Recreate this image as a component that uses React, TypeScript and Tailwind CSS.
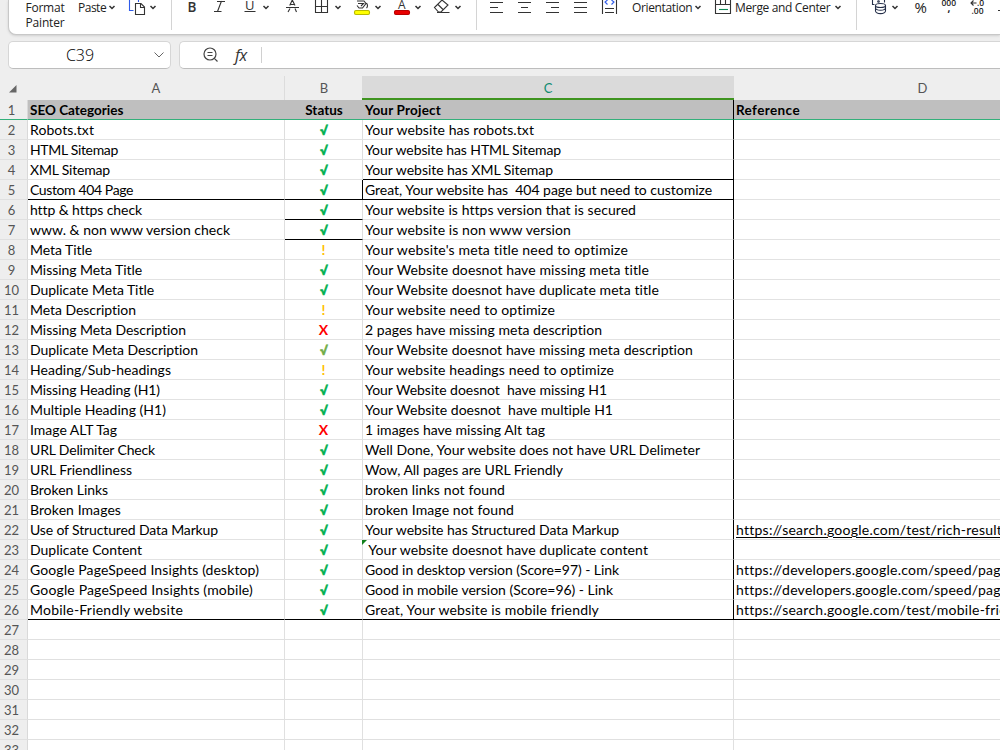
import { useLayoutEffect, useRef } from 'react'
import type { ReactNode } from 'react'

type Mark = 'ok' | 'olive' | 'warn' | 'bad'

interface Row {
    category: string
    categoryWidth: number
    mark: Mark
    project: string
    projectWidth: number
    link?: string
}

const rows: Row[] = [
    { category: 'Robots.txt', categoryWidth: 64, mark: 'ok', project: 'Your website has robots.txt', projectWidth: 169 },
    { category: 'HTML Sitemap', categoryWidth: 88, mark: 'ok', project: 'Your website has HTML Sitemap', projectWidth: 196 },
    { category: 'XML Sitemap', categoryWidth: 80, mark: 'ok', project: 'Your website has XML Sitemap', projectWidth: 188 },
    { category: 'Custom 404 Page', categoryWidth: 103, mark: 'ok', project: 'Great, Your website has  404 page but need to customize', projectWidth: 347 },
    { category: 'http & https check', categoryWidth: 112, mark: 'ok', project: 'Your website is https version that is secured', projectWidth: 271 },
    { category: 'www. & non www version check', categoryWidth: 200, mark: 'ok', project: 'Your website is non www version', projectWidth: 206 },
    { category: 'Meta Title', categoryWidth: 62, mark: 'warn', project: "Your website's meta title need to optimize", projectWidth: 263 },
    { category: 'Missing Meta Title', categoryWidth: 112, mark: 'ok', project: 'Your Website doesnot have missing meta title', projectWidth: 284 },
    { category: 'Duplicate Meta Title', categoryWidth: 124, mark: 'ok', project: 'Your Website doesnot have duplicate meta title', projectWidth: 294 },
    { category: 'Meta Description', categoryWidth: 106, mark: 'warn', project: 'Your website need to optimize', projectWidth: 190 },
    { category: 'Missing Meta Description', categoryWidth: 156, mark: 'bad', project: '2 pages have missing meta description', projectWidth: 237 },
    { category: 'Duplicate Meta Description', categoryWidth: 168, mark: 'olive', project: 'Your Website doesnot have missing meta description', projectWidth: 328 },
    { category: 'Heading/Sub-headings', categoryWidth: 141, mark: 'warn', project: 'Your website headings need to optimize', projectWidth: 249 },
    { category: 'Missing Heading (H1)', categoryWidth: 130, mark: 'ok', project: 'Your Website doesnot  have missing H1', projectWidth: 242 },
    { category: 'Multiple Heading (H1)', categoryWidth: 136, mark: 'ok', project: 'Your Website doesnot  have multiple H1', projectWidth: 248 },
    { category: 'Image ALT Tag', categoryWidth: 87, mark: 'bad', project: '1 images have missing Alt tag', projectWidth: 180 },
    { category: 'URL Delimiter Check', categoryWidth: 125, mark: 'ok', project: 'Well Done, Your website does not have URL Delimeter', projectWidth: 335 },
    { category: 'URL Friendliness', categoryWidth: 102, mark: 'ok', project: 'Wow, All pages are URL Friendly', projectWidth: 198 },
    { category: 'Broken Links', categoryWidth: 78, mark: 'ok', project: 'broken links not found', projectWidth: 140 },
    { category: 'Broken Images', categoryWidth: 91, mark: 'ok', project: 'broken Image not found', projectWidth: 149 },
    { category: 'Use of Structured Data Markup', categoryWidth: 188, mark: 'ok', project: 'Your website has Structured Data Markup', projectWidth: 254, link: 'https://search.google.com/test/rich-results' },
    { category: 'Duplicate Content', categoryWidth: 112, mark: 'ok', project: ' Your website doesnot have duplicate content', projectWidth: 283 },
    { category: 'Google PageSpeed Insights (desktop)', categoryWidth: 229, mark: 'ok', project: 'Good in desktop version (Score=97) - Link', projectWidth: 254, link: 'https://developers.google.com/speed/pagespeed' },
    { category: 'Google PageSpeed Insights (mobile)', categoryWidth: 223, mark: 'ok', project: 'Good in mobile version (Score=96) - Link', projectWidth: 248, link: 'https://developers.google.com/speed/pagespeed' },
    { category: 'Mobile-Friendly website', categoryWidth: 153, mark: 'ok', project: 'Great, Your website is mobile friendly', projectWidth: 234, link: 'https://search.google.com/test/mobile-friendly' },
]

const emptyRows = [27, 28, 29, 30, 31, 32, 33]

const marks: Record<Mark, { sign: string; style: string }> = {
    ok: { sign: '√', style: "text-[#00b050] font-['Open_Sans',sans-serif] font-extrabold text-[12px] leading-[21px] [-webkit-text-stroke:0.5px_#00b050]" },
    olive: { sign: '√', style: "text-[#70ad47] font-['Open_Sans',sans-serif] font-extrabold text-[12px] leading-[21px] [-webkit-text-stroke:0.5px_#70ad47]" },
    warn: { sign: '!', style: 'text-[#ffc000]' },
    bad: { sign: 'X', style: 'text-[#ff0000]' },
}

// Spreads the letters so that the text takes up the given width
function FitText({ text, width }: { text: string; width: number }) {
    const ref = useRef<HTMLSpanElement>(null)

    useLayoutEffect(() => {
        const el = ref.current
        if (!el) return
        el.style.letterSpacing = '0px'
        const natural = el.getBoundingClientRect().width
        el.style.letterSpacing = `${(width - natural) / text.length}px`
    }, [text, width])

    return <span ref={ref} className="whitespace-pre">{text}</span>
}

// Ribbon drawings share one coordinate system, each tile shows the slice that starts at x
function Tile({ x, w, children }: { x: number; w: number; children?: ReactNode }) {
    return (
        <svg width={w} height={34} viewBox={`${x} 0 ${w} 34`} className="shrink-0" fill="none" stroke="#333" strokeWidth={1.1}>
            {children}
        </svg>
    )
}

function Chevron({ x }: { x: number }) {
    return <path d={`M${x - 2.5} 6 l2.5 2.5 l2.5 -2.5`} strokeWidth={1.5} />
}

function Divider() {
    return <div className="w-px h-[30px] shrink-0 bg-[#d4d4d4]" />
}

function Ribbon() {
    return (
        <div className="ml-2 h-[35px] flex bg-white rounded-bl-lg border-b border-l border-[#c8c8c8] shadow-sm overflow-hidden font-['Open_Sans',sans-serif] text-[12px] text-[#222]">
            <div className="ml-[12px] w-[48px] shrink-0 text-center leading-[15px] tracking-[-0.2px]">
                <div>Format</div>
                <div>Painter</div>
            </div>
            <div className="ml-[9px] w-[30px] shrink-0 leading-[15px] tracking-[-0.500px]">Paste</div>
            <Tile x={108} w={63}>
                <Chevron x={112} />
                <path d="M138.500 0 V2 M129.500 0 V10.500 H133.500" stroke="#2f5bea" />
                <path d="M135.500 3.500 H141 L144.500 7 V14.500 H135.500 Z M140.500 3.500 V7.500 H144.500" />
                <Chevron x={153} />
            </Tile>
            <Divider />
            <Tile x={172} w={304}>
                <g fill="#333" stroke="none" fontFamily="Open Sans, sans-serif">
                    <text x="187.500" y="12" fontSize="13.500" fontWeight="600">B</text>
                    <text x="245" y="9.500" fontSize="13">U</text>
                    <text x="398" y="9" fontSize="12">A</text>
                </g>
                <path d="M217 1.500 H225 M214 11.500 H221.500 M221.500 1 L217.500 11.500 M244.500 11.500 H255.500" />
                <Chevron x={266} />
                <path d="M286 7.500 H299 M288 12 L290 8.500 M296.500 12 L295 8.500 M289.700 5.500 L292.300 0 L295 5.500 M290.500 4.500 H294" />
                <path d="M315.500 -1 V12.500 H327.500 V-1 M315.500 6.500 H327.500 M321.500 0 V12.500" />
                <Chevron x={338} />
                <path d="M357 1 H364 L366 3.500 L362.500 8 H359 L357 5.500 M358 3.500 H363.500 L361 6 M366.500 3 Q368.500 6 366.500 8" />
                <rect x="354.500" y="10.500" width="15" height="4" rx="1.500" fill="#ffff00" stroke="#b9b900" />
                <Chevron x={378} />
                <rect x="394.500" y="10.500" width="15" height="4" rx="1.500" fill="#e80000" stroke="#b80000" />
                <Chevron x={418} />
                <path d="M434.500 7.500 L442 0 L448 5 L441 12 H438.500 Z M438 4.500 L443.500 10 M437 12.500 H449.500" />
                <Chevron x={458} />
            </Tile>
            <Divider />
            <Tile x={477} w={155}>
                <path d="M490 2.500 H503 M490 7.500 H498 M490 12.500 H503 M518 2.500 H531 M521 7.500 H528 M518 12.500 H531 M546 2.500 H559 M551 7.500 H559 M546 12.500 H559 M574 2.500 H587 M574 7.500 H587 M574 12.500 H587" />
                <path d="M602.500 0 V14 M616.500 0 V14 M605 8.500 H614 M605 12.500 H614" />
                <path d="M607.500 0 L605 2 L607.500 4.500 M611.500 0 L614 2 L611.500 4.500" stroke="#2f5bea" />
            </Tile>
            <div className="w-[62px] shrink-0 leading-[15px] tracking-[-0.350px]">Orientation</div>
            <Tile x={694} w={41}>
                <Chevron x={698} />
                <path d="M715.500 -1 V13.500 H730.500 V-1 M715.500 4.500 H730.500 M720.500 0 V4.500 M725.500 0 V4.500" />
                <path d="M719 9.500 H728" stroke="#0e8a55" />
            </Tile>
            <div className="w-[96px] shrink-0 whitespace-nowrap leading-[15px] tracking-[-0.350px]">Merge and Center</div>
            <Tile x={831} w={25}>
                <Chevron x={838} />
            </Tile>
            <Divider />
            <Tile x={857} w={143}>
                <g stroke="#26304a">
                    <path d="M874.500 4.500 H872.500 V0 M884.500 0 V2.500" />
                    <path d="M875.500 5.500 V11 C876 14.500 885 14.500 885.500 11 V5.500 M875.500 8 C876 11 885 11 885.500 8" />
                    <ellipse cx="880.500" cy="5.500" rx="5" ry="2" />
                    <circle cx="878.500" cy="1.500" r="0.800" />
                </g>
                <Chevron x={895} />
                <g fill="#222" stroke="none" fontFamily="Open Sans, sans-serif">
                    <text x="914.500" y="12.500" fontSize="15">%</text>
                    <text x="941.500" y="5.500" fontSize="8.500" fontWeight="600">000</text>
                    <text x="947.500" y="12" fontSize="10" fontWeight="700">,</text>
                    <text x="977" y="5.500" fontSize="8.500" fontWeight="600">.0</text>
                    <text x="971.500" y="14" fontSize="8.500" fontWeight="600">.00</text>
                </g>
                <path d="M973.500 0.500 L971 3 L973.500 5.500 M971 3 H976.500 M998 10.500 H1000" />
            </Tile>
        </div>
    )
}

function FormulaBar() {
    return (
        <div className="mt-[6px] ml-2 h-7 flex gap-2">
            <div className="w-[163px] shrink-0 flex items-center bg-white rounded-[5px] border border-[#d6d6d6] border-b-[#bdbdbd]">
                <span className="w-[142px] pb-px text-center font-['Open_Sans',sans-serif] font-light text-[16px] leading-none text-black">C39</span>
                <svg width="12" height="8" viewBox="0 0 12 8" fill="none" stroke="#666" className="ml-[2px]">
                    <path d="M1.500 1.500 L6 6 L10.500 1.500" />
                </svg>
            </div>
            <div className="flex-1 flex items-center bg-white rounded-l-[5px] border border-r-0 border-[#d6d6d6] border-b-[#bdbdbd]">
                <svg width="16" height="16" viewBox="0 0 16 16" fill="none" stroke="#444" strokeWidth="1.200" className="ml-[23px]">
                    <circle cx="7" cy="7" r="6" />
                    <path d="M4.500 5.500 H9.500 M4.500 8.500 H9.500 M11.300 11.300 L14.500 14.500" />
                </svg>
                <span className="ml-[16px] w-[16px] font-['Open_Sans',sans-serif] italic text-[16px] text-[#333] leading-none tracking-[-0.5px]">fx</span>
                <div className="ml-[10px] w-px h-4 bg-[#d0d0d0]" />
            </div>
        </div>
    )
}

function ColumnHeads() {
    return (
        <div className="mt-[7px] h-6 flex text-center text-[13px] leading-[25px] text-[#555]">
            <div className="w-7 shrink-0 flex items-center justify-center">
                <svg width="8" height="8" viewBox="0 0 8 8" className="-ml-0.5 mt-0.5">
                    <path d="M7.500 0 V7.500 H0 Z" fill="#666" />
                </svg>
            </div>
            <div className="w-[257px] shrink-0 border-r border-[#dcdcdc]">A</div>
            <div className="w-[77px] shrink-0 pl-px">B</div>
            <div className="w-[372px] shrink-0 bg-[#dadada] border-b-2 border-[#3f9420] text-[#0e8a70]">C</div>
            <div className="w-[377px] shrink-0">D</div>
        </div>
    )
}

function RowNumber({ n }: { n: number }) {
    return (
        <div className={`w-7 shrink-0 pr-[4px] text-center text-[13px] font-normal text-[#555] bg-[#eee] border-r border-b border-r-[#d9d9d9] ${n === 1 ? 'border-b-[#33b07a]' : 'border-b-[#e0e0e0]'}`}>
            {n}
        </div>
    )
}

function HeadRow() {
    const cell = 'shrink-0 border-b border-b-[#33b07a] bg-[#bfbfbf]'
    return (
        <div className="flex h-5 leading-[20px] font-bold text-[13.500px]">
            <RowNumber n={1} />
            <div className={`${cell} w-[257px] pl-[2px]`}>SEO Categories</div>
            <div className={`${cell} w-[78px] text-center`}>Status</div>
            <div className={`${cell} w-[371px] pl-[2px] border-r border-r-black`}><FitText text="Your Project" width={76} /></div>
            <div className={`${cell} w-[377px] pl-[2px]`}><FitText text="Reference" width={64} /></div>
        </div>
    )
}

function DataRow({ n, row }: { n: number; row: Row }) {
    const last = n === 26
    const mark = marks[row.mark]
    return (
        <div className="flex h-5 leading-[20px]">
            <RowNumber n={n} />
            <div className={`w-[257px] shrink-0 pl-[2px] border-r border-b border-r-[#dedede] ${last || n === 5 ? 'border-b-black' : 'border-b-[#e2e2e2]'}`}>
                <FitText text={row.category} width={row.categoryWidth} />
            </div>
            <div className={`w-[78px] shrink-0 text-center font-bold border-r border-b ${mark.style} ${n === 5 ? 'border-r-black' : 'border-r-[#dedede]'} ${last || (n >= 5 && n <= 7) ? 'border-b-black' : 'border-b-[#e2e2e2]'}`}>
                {mark.sign}
            </div>
            <div className={`relative w-[371px] shrink-0 pl-[2px] border-r border-b border-r-black ${last || n === 4 || n === 5 ? 'border-b-black' : 'border-b-[#e2e2e2]'}`}>
                {n === 23 && (
                    <svg width="5" height="5" className="absolute -left-px top-0">
                        <path d="M0 0 H5 L0 5 Z" fill="#12801c" />
                    </svg>
                )}
                <FitText text={row.project} width={row.projectWidth} />
            </div>
            <div className={`w-[377px] shrink-0 pl-[2px] tracking-[0.250px] border-b ${last ? 'border-b-black' : 'border-b-[#e2e2e2]'}`}>
                <span className={n === 22 ? 'underline underline-offset-2' : ''}>{row.link}</span>
            </div>
        </div>
    )
}

export default function App() {
    return (
        <div className="w-[1000px] h-[750px] overflow-hidden bg-[#eee] font-['Lato',sans-serif] [font-variant-ligatures:none]">
            <Ribbon />
            <FormulaBar />
            <ColumnHeads />
            <div className="bg-white text-[14px] text-black">
                <HeadRow />
                {rows.map((row, i) => (
                    <DataRow key={row.category} n={i + 2} row={row} />
                ))}
                {emptyRows.map((n) => (
                    <div key={n} className="flex h-5 leading-[20px]">
                        <RowNumber n={n} />
                        <div className="w-[257px] shrink-0 border-r border-b border-[#e0e0e0]" />
                        <div className="w-[78px] shrink-0 border-r border-b border-[#e0e0e0]" />
                        <div className="w-[371px] shrink-0 border-r border-b border-[#e0e0e0]" />
                        <div className="w-[377px] shrink-0 border-b border-[#e0e0e0]" />
                    </div>
                ))}
            </div>
        </div>
    )
}
